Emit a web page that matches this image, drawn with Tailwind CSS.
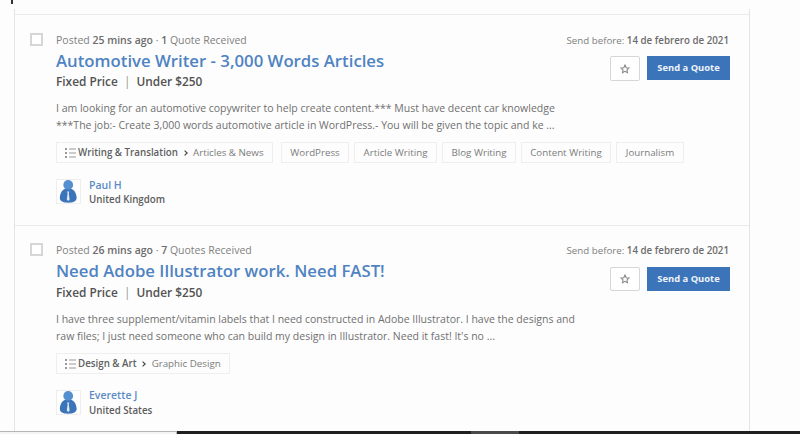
<!DOCTYPE html>
<html lang="en">
<head>
  <meta charset="UTF-8" />
  <meta name="viewport" content="width=device-width, initial-scale=1.0"/>
  <title>Jobs</title>
  <script src="https://cdn.jsdelivr.net/npm/@tailwindcss/browser@4"></script>
</head>
<body class="bg-[#fdfdfd] h-[434px] overflow-hidden flex flex-col font-['Open_Sans',sans-serif] text-[#707070]">

  <!-- Text cursor left of the list -->
  <div class="h-[9px] shrink-0 pl-[11px]"><div class="w-[2px] h-[4px] bg-[#333]"></div></div>

  <!-- Job list -->
  <main class="w-[736px] h-[422px] shrink-0 overflow-hidden ml-[14px] pt-[5px] border-x border-[#e4e4e4]">

    <!-- Job 1 -->
    <article class="flex h-[211px] border-t border-[#ebebeb] pt-[17px] pl-[15px] pr-[20px]">
      <div class="w-[13px] h-[13px] mt-px border-2 border-[#d6d6d6] bg-white shrink-0"></div>
      <div class="ml-[13px] flex-1 whitespace-nowrap">
        <div class="flex justify-between h-[41px]">
          <div>
            <p class="text-[10.5px] leading-[16px] text-[#808080]">Posted <b class="font-semibold text-[#6c6c6c]">25 mins ago</b> · <b class="font-semibold text-[#6c6c6c]">1</b> Quote Received</p>
            <h2 class="mt-px text-[16.75px] leading-[24px] font-semibold text-[#4f83c2]">Automotive Writer - 3,000 Words Articles</h2>
          </div>
          <div class="flex flex-col items-end">
            <p class="text-[9.75px] leading-[18px] text-[#808080]">Send before: <b class="font-semibold text-[#6c6c6c]">14 de febrero de 2021</b></p>
            <div class="flex gap-[7px] mt-[6px] -mr-px">
              <button class="w-[30px] h-[25px] shrink-0 flex items-center justify-center border border-[#d6d6d6] rounded-[2px] bg-white">
                <svg class="w-[10px] h-[10px]" viewBox="0 0 24 24" fill="none" stroke="#888" stroke-width="2.6"><path d="M12 2.5l2.9 6.3 6.8.8-5 4.7 1.3 6.8-6-3.4-6 3.4 1.3-6.8-5-4.7 6.8-.8z"/></svg>
              </button>
              <button class="w-[83px] h-[24px] shrink-0 bg-[#3c74b9] text-[#eef4fb] text-[9.4px] font-bold">Send a Quote</button>
            </div>
          </div>
        </div>
        <p class="text-[11.85px] leading-[16px] font-semibold text-[#525252]">Fixed Price <span class="font-normal text-[#999] mx-[3px]">|</span> Under $250</p>
        <p class="mt-[11px] text-[10.5px] leading-[16.5px]">I am looking for an automotive copywriter to help create content.*** Must have decent car knowledge<br>***The job:- Create 3,000 words automotive article in WordPress.- You will be given the topic and ke ...</p>
        <div class="mt-[9px] flex text-[9.75px] leading-[19px] text-[#7c7c7c]">
          <div class="w-[217px] h-[21px] pl-[8px] flex items-center border border-[#efefef]">
            <svg class="w-[11px] h-[10px] mr-[2px]" viewBox="0 0 11 10" fill="#999"><path d="M0 0h2v2H0zM4 .5h7v1H4zM0 4h2v2H0zM4 4.5h7v1H4zM0 8h2v2H0zM4 8.5h7v1H4z"/></svg>
            <b class="font-semibold text-[#5f5f5f]">Writing &amp; Translation</b>
            <svg class="w-[4px] h-[6px] mx-[5.5px]" viewBox="0 0 4 6" fill="none" stroke="#444" stroke-width="1.2"><path d="M.6.6L3.2 3 .6 5.4"/></svg>
            <span>Articles &amp; News</span>
          </div>
          <div class="ml-[8px] w-[68px] h-[21px] text-center border border-[#efefef]">WordPress</div>
          <div class="ml-[5px] w-[83px] h-[21px] text-center border border-[#efefef]">Article Writing</div>
          <div class="ml-[5px] w-[74px] h-[21px] text-center border border-[#efefef]">Blog Writing</div>
          <div class="ml-[5px] w-[90px] h-[21px] text-center border border-[#efefef]">Content Writing</div>
          <div class="ml-[5px] w-[68px] h-[21px] text-center border border-[#efefef]">Journalism</div>
        </div>
        <div class="mt-[16px] flex font-semibold">
          <div class="w-[25px] h-[25px] border border-[#eee] bg-white">
            <svg class="w-[23px] h-[23px]" viewBox="0 0 23 23"><path d="M7.500 9C4.500 10.500 2.800 14.500 2.800 18c0 3 3 4.700 8.400 4.700s8.400-1.700 8.400-4.700c0-3.500-1.700-7.500-4.700-9z" fill="#3c74b9"/><circle cx="11.200" cy="4.900" r="4.900" fill="#5490cf"/><path d="M10.200 11.500h2l-.4 2 .8 6-1.400 1.500-1.400-1.500.8-6z" fill="#dfeaf6"/></svg>
          </div>
          <div class="ml-[8px] -mt-px">
            <p class="text-[10.5px] leading-[14px] text-[#5a8bc6]">Paul H</p>
            <p class="text-[9.75px] leading-[16px] text-[#5c5c5c]">United Kingdom</p>
          </div>
        </div>
      </div>
    </article>

    <!-- Job 2 -->
    <article class="flex h-[211px] border-t border-[#ebebeb] pt-[16px] pl-[15px] pr-[20px]">
      <div class="w-[13px] h-[13px] mt-px border-2 border-[#d6d6d6] bg-white shrink-0"></div>
      <div class="ml-[13px] flex-1 whitespace-nowrap">
        <div class="flex justify-between h-[41px]">
          <div>
            <p class="text-[10.5px] leading-[16px] text-[#808080]">Posted <b class="font-semibold text-[#6c6c6c]">26 mins ago</b> · <b class="font-semibold text-[#6c6c6c]">7</b> Quotes Received</p>
            <h2 class="mt-px text-[16.75px] leading-[24px] font-semibold text-[#4f83c2]">Need Adobe Illustrator work. Need FAST!</h2>
          </div>
          <div class="flex flex-col items-end">
            <p class="text-[9.75px] leading-[18px] text-[#808080]">Send before: <b class="font-semibold text-[#6c6c6c]">14 de febrero de 2021</b></p>
            <div class="flex gap-[7px] mt-[7px] -mr-px">
              <button class="w-[30px] h-[24px] shrink-0 flex items-center justify-center border border-[#d6d6d6] rounded-[2px] bg-white">
                <svg class="w-[10px] h-[10px]" viewBox="0 0 24 24" fill="none" stroke="#888" stroke-width="2.6"><path d="M12 2.5l2.9 6.3 6.8.8-5 4.7 1.3 6.8-6-3.4-6 3.4 1.3-6.8-5-4.7 6.8-.8z"/></svg>
              </button>
              <button class="w-[83px] h-[24px] shrink-0 bg-[#3c74b9] text-[#eef4fb] text-[9.4px] font-bold">Send a Quote</button>
            </div>
          </div>
        </div>
        <p class="mt-px text-[11.85px] leading-[16px] font-semibold text-[#525252]">Fixed Price <span class="font-normal text-[#999] mx-[3px]">|</span> Under $250</p>
        <p class="mt-[11px] text-[10.5px] leading-[16.5px]">I have three supplement/vitamin labels that I need constructed in Adobe Illustrator. I have the designs and<br>raw files; I just need someone who can build my design in Illustrator. Need it fast! It's no ...</p>
        <div class="mt-[9px] flex text-[9.75px] leading-[19px] text-[#7c7c7c]">
          <div class="w-[174px] h-[21px] pl-[8px] flex items-center border border-[#efefef]">
            <svg class="w-[11px] h-[10px] mr-[2px]" viewBox="0 0 11 10" fill="#999"><path d="M0 0h2v2H0zM4 .5h7v1H4zM0 4h2v2H0zM4 4.5h7v1H4zM0 8h2v2H0zM4 8.5h7v1H4z"/></svg>
            <b class="font-semibold text-[#5f5f5f]">Design &amp; Art</b>
            <svg class="w-[4px] h-[6px] mx-[5.5px]" viewBox="0 0 4 6" fill="none" stroke="#444" stroke-width="1.2"><path d="M.6.6L3.2 3 .6 5.4"/></svg>
            <span>Graphic Design</span>
          </div>
        </div>
        <div class="mt-[16px] flex font-semibold">
          <div class="w-[25px] h-[25px] border border-[#eee] bg-white">
            <svg class="w-[23px] h-[23px]" viewBox="0 0 23 23"><path d="M7.500 9C4.500 10.500 2.800 14.500 2.800 18c0 3 3 4.700 8.400 4.700s8.400-1.700 8.400-4.700c0-3.500-1.700-7.500-4.700-9z" fill="#3c74b9"/><circle cx="11.200" cy="4.900" r="4.900" fill="#5490cf"/><path d="M10.200 11.500h2l-.4 2 .8 6-1.400 1.500-1.400-1.500.8-6z" fill="#dfeaf6"/></svg>
          </div>
          <div class="ml-[8px] -mt-[2px]">
            <p class="text-[10.5px] leading-[14px] text-[#5a8bc6]">Everette J</p>
            <p class="text-[9.75px] leading-[18px] text-[#5c5c5c]">United States</p>
          </div>
        </div>
      </div>
    </article>
  </main>

  <!-- Taskbar edge -->
  <footer class="h-[3px] shrink-0 flex bg-[#1e1f20]">
    <div class="w-[177px] bg-[#f3f3f3] border-t border-r border-[#b5b5b5]"></div>
    <div class="ml-[294px] w-[48px] bg-[#4a4a4a]"></div>
  </footer>
</body>
</html>
